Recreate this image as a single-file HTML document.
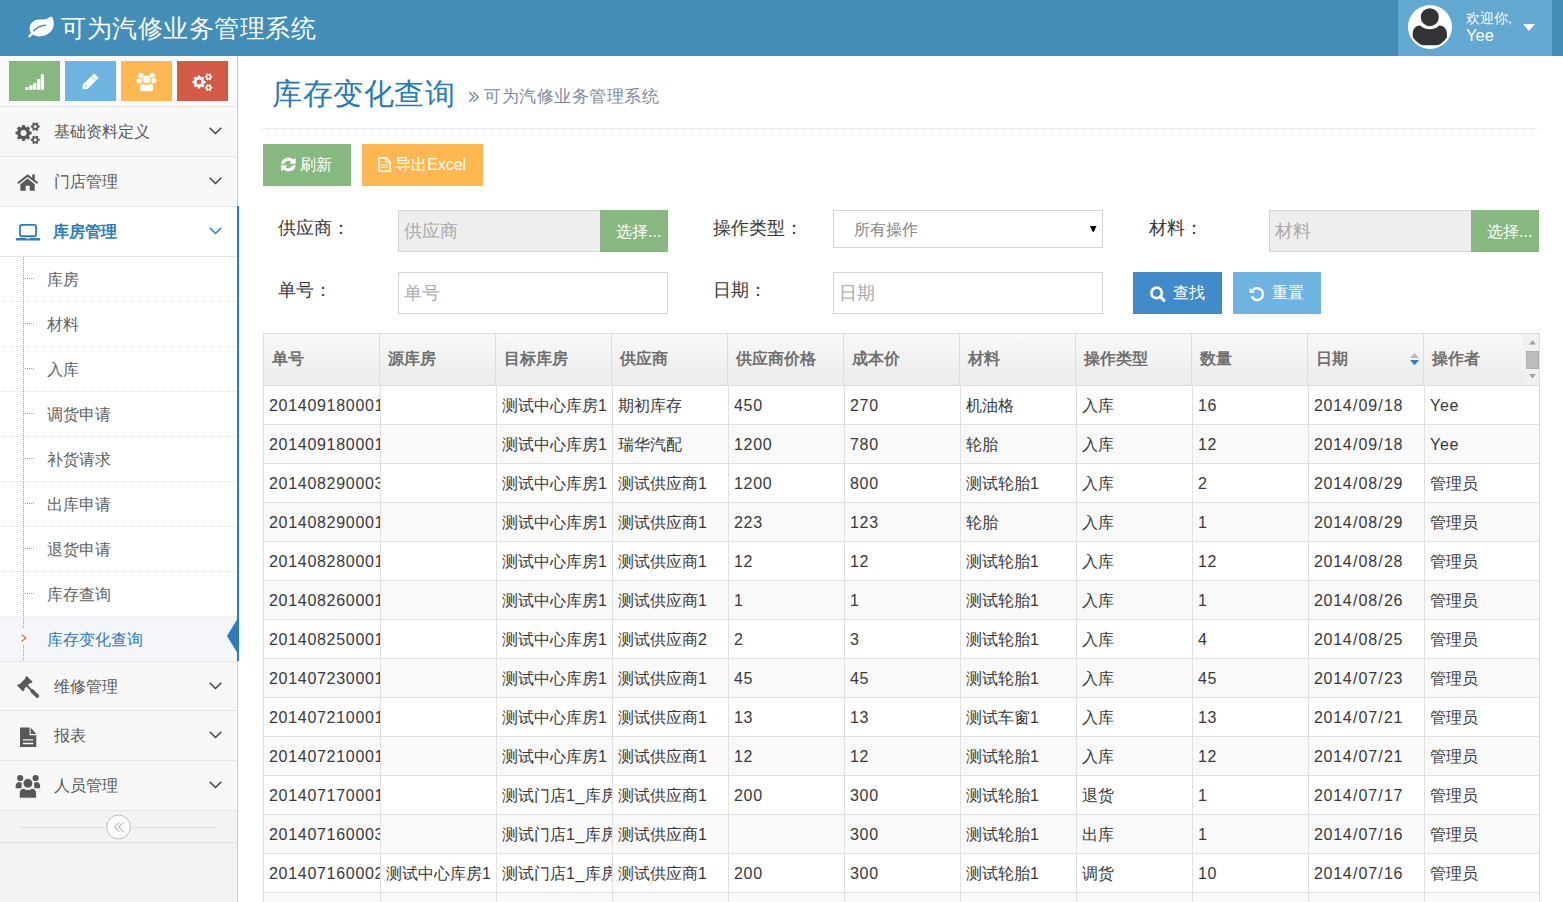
<!DOCTYPE html>
<html><head><meta charset="utf-8">
<style>
*{box-sizing:border-box;margin:0;padding:0}
html,body{width:1563px;height:902px;overflow:hidden}
body{font-family:"Liberation Sans",sans-serif;background:#fff;position:relative;color:#393939}
.a{position:absolute}
.t{position:absolute;white-space:nowrap;line-height:1}
svg{position:absolute;display:block;overflow:visible}
/* navbar */
#nav{left:0;top:0;width:1563px;height:56px;background:#438eb9}
#brand{left:61px;top:16px;font-size:25px;letter-spacing:0.5px;color:#fff}
#user{left:1398px;top:0;width:154px;height:56px;background:#62a8d1}
/* sidebar */
#side{left:0;top:56px;width:238px;height:846px;background:#f2f2f2;border-right:1px solid #ccc}
#shortcuts{left:0;top:56px;width:237px;height:50px;background:#fafafa}
.sc{position:absolute;top:61px;width:51px;height:40px}
.nitem{position:absolute;left:0;width:237px;height:50px;background:#f8f8f8;border-top:1px solid #e5e5e5}
.nitem .t{left:54px;top:17px;font-size:16px;color:#585858}
.sub{position:absolute;left:0;width:237px;height:45px;background:#fff}
.sub .t{left:47px;top:15px;font-size:16px;color:#616161}
.sep{position:absolute;left:0;width:237px;height:1px;background:repeating-linear-gradient(90deg,#e4e4e4 0 1px,transparent 1px 2px)}
.tick{position:absolute;left:25px;width:10px;height:1px;background:repeating-linear-gradient(90deg,#7ea6c8 0 1px,transparent 1px 2px)}
/* content */
.lbl{font-size:18px;color:#393939}
.inp{position:absolute;border:1px solid #d5d5d5;background:#fff;height:42px}
.ph{font-size:18px;color:#aaa;margin-top:-1px}
.btn{position:absolute;height:42px}
.btxt{font-size:16px;color:#fff}
/* grid */
.th{position:absolute;top:0;height:51px;background:linear-gradient(#f8f8f8,#ececec)}
.th .t{font-size:16px;font-weight:bold;color:#707070;left:8px;top:17px}
.row{position:absolute;left:0;width:1275px;height:39px;border-bottom:1px solid #e1e1e1}
.row.alt{background:#f9f9f9}
.cell{position:absolute;top:0;height:38px;border-right:1px solid #e1e1e1;overflow:hidden}
.cell .t{font-size:16px;color:#393939;left:5px;top:12px}
.ls{letter-spacing:0.7px}
.sl{padding:0 0.5px}
</style></head><body>

<!-- NAVBAR -->
<div id="nav" class="a"></div>
<svg style="left:27px;top:15.5px" width="28" height="22" viewBox="0 0 28 22"><path d="M24.3 0.5 C25.9 1.2 26.8 4 26.8 8.3 C26.8 15 20 20.4 12.5 20.4 C9.5 20.4 7.5 19.6 6 18.6 L3.3 21.1 C2.5 21.8 1.3 21.4 1.2 20.3 C1.2 19.8 1.5 19.4 1.9 19 L4 16.9 C3 15.6 2.6 14.1 2.6 12.6 C2.6 7 7.5 3.6 12.5 3.6 C16.5 3.6 19.5 3.4 21 2.3 C22.2 1.5 23.3 0.5 24.3 0.5 Z" fill="#fff"/><path d="M6.6 14.9 C9.5 11.6 13.5 9.5 18.7 9.2" fill="none" stroke="#438eb9" stroke-width="1.4" stroke-linecap="round"/></svg>
<div id="brand" class="t">可为汽修业务管理系统</div>
<div id="user" class="a"></div>
<svg style="left:1408px;top:5px" width="44" height="44" viewBox="0 0 44 44"><defs><clipPath id="av"><circle cx="22" cy="22" r="20.8"/></clipPath></defs><circle cx="22" cy="22" r="22" fill="#fff"/><g clip-path="url(#av)" fill="#333"><circle cx="21.8" cy="12.2" r="9"/><path d="M4.7 40.2 V29 C4.7 23.5 8 20.5 12.3 20.5 C14.8 23 18 24.3 21.8 24.3 C25.6 24.3 28.8 23 31.3 20.5 C35.6 20.5 38.9 23.5 38.9 29 V40.2 Z"/></g><circle cx="22" cy="22" r="20.6" fill="none" stroke="#fff" stroke-width="1.4"/></svg>
<div class="t" style="left:1466px;top:11.5px;font-size:13.5px;color:#fff">欢迎你,</div>
<div class="t" style="left:1466px;top:27px;font-size:16.5px;color:#fff">Yee</div>
<svg style="left:1523px;top:24px" width="12" height="7" viewBox="0 0 12 7"><path d="M0 0 H12 L6 7 Z" fill="#fff"/></svg>

<!-- SIDEBAR -->
<div id="side" class="a"></div>
<div id="shortcuts" class="a"></div>
<div class="sc" style="left:9px;background:#87b87f"></div>
<div class="sc" style="left:65px;background:#6fb3e0"></div>
<div class="sc" style="left:121px;background:#ffb752"></div>
<div class="sc" style="left:177px;background:#d15b47"></div>
<svg style="left:25px;top:73.5px" width="19" height="16" viewBox="0 0 19 16" fill="#fff"><rect x="0.3" y="13.3" width="3.3" height="2.5"/><rect x="4.3" y="11.2" width="3.3" height="4.6"/><rect x="8.1" y="9.2" width="3.3" height="6.6"/><rect x="12" y="5" width="3.3" height="10.8"/><rect x="15.8" y="0.2" width="3.2" height="15.6"/></svg>
<svg style="left:82px;top:73px" width="17" height="17" viewBox="0 0 17 17"><path d="M11.4 1 Q12.1 0.3 12.8 1 L16.1 4.2 Q16.8 4.9 16.1 5.6 L5.8 15.8 L0.6 16.4 L0.8 11.6 Z" fill="#fff"/><path d="M9.3 3.1 L13.9 7.7" stroke="#6fb3e0" stroke-width="0.7"/><path d="M3.1 12.3 L4.4 14" stroke="#6fb3e0" stroke-width="0.9" stroke-linecap="round"/></svg>
<svg style="left:136px;top:71.5px" width="21" height="20" viewBox="0 0 21 20" fill="#fff" stroke="#ffb752" stroke-width="0.7"><circle cx="4.8" cy="3.6" r="3"/><circle cx="16.2" cy="3.6" r="3"/><circle cx="3.3" cy="8.8" r="3"/><circle cx="17.7" cy="8.8" r="3"/><circle cx="10.5" cy="7.2" r="4.3"/><path d="M3.6 15 C3.6 12.6 5.2 11.6 6.8 11.6 C7.8 12.3 9.1 12.7 10.5 12.7 C11.9 12.7 13.2 12.3 14.2 11.6 C15.8 11.6 17.4 12.6 17.4 15 V17.5 C17.4 18.8 16.7 19.5 15.4 19.5 H5.6 C4.3 19.5 3.6 18.8 3.6 17.5 Z"/></svg>

<div class="nitem" style="top:106px"><div class="t">基础资料定义</div></div>
<div class="nitem" style="top:156px"><div class="t">门店管理</div></div>
<div class="nitem" style="top:206px;background:#fff"><div class="t" style="color:#2b7dbc;font-weight:bold;left:53px">库房管理</div></div>
<!-- home -->
<svg style="left:17px;top:174px" width="22" height="18" viewBox="0 0 22 18" fill="#585858"><path d="M0.8 9.2 L10.7 1.6 L20.6 9.2" fill="none" stroke="#585858" stroke-width="2" stroke-linejoin="miter"/><rect x="15.2" y="0.5" width="2.6" height="5"/><path d="M3.4 10.2 L10.7 4.5 L17.7 10.2 V16.8 H12.7 V11.7 H8.7 V16.8 H3.4 Z"/></svg>
<!-- laptop -->
<svg style="left:16px;top:223.5px" width="25" height="17" viewBox="0 0 25 17"><rect x="3.95" y="0.95" width="16.1" height="11.3" rx="1.5" fill="none" stroke="#2b7dbc" stroke-width="1.8"/><path d="M0.6 14.1 H23.6 C24 14.1 24.2 14.3 24.2 14.7 V15.4 C24.2 16 23.8 16.4 23.2 16.4 H0.8 C0.2 16.4 -0.2 16 -0.2 15.4 V14.7 C-0.2 14.3 0.1 14.1 0.6 14.1 Z" fill="#2b7dbc"/><rect x="10.4" y="14.1" width="3.2" height="1" fill="#c9dcec"/></svg>
<!-- chevrons -->
<svg style="left:209px;top:126.7px" width="13" height="8" viewBox="0 0 13 8"><path d="M0.7 0.7 L6.5 6.5 L12.3 0.7" fill="none" stroke="#444" stroke-width="1.5"/></svg>
<svg style="left:209px;top:176.7px" width="13" height="8" viewBox="0 0 13 8"><path d="M0.7 0.7 L6.5 6.5 L12.3 0.7" fill="none" stroke="#444" stroke-width="1.5"/></svg>
<svg style="left:209px;top:226.7px" width="13" height="8" viewBox="0 0 13 8"><path d="M0.7 0.7 L6.5 6.5 L12.3 0.7" fill="none" stroke="#2b7dbc" stroke-width="1.5"/></svg>

<!-- submenu -->
<div class="a" style="left:0;top:256px;width:237px;height:405px;background:#fff;border-top:1px solid #e5e5e5"></div>
<div class="sub" style="top:257px"><div class="t">库房</div></div>
<div class="sub" style="top:302px"><div class="t">材料</div></div>
<div class="sub" style="top:347px"><div class="t">入库</div></div>
<div class="sub" style="top:392px"><div class="t">调货申请</div></div>
<div class="sub" style="top:437px"><div class="t">补货请求</div></div>
<div class="sub" style="top:482px"><div class="t">出库申请</div></div>
<div class="sub" style="top:527px"><div class="t">退货申请</div></div>
<div class="sub" style="top:572px"><div class="t">库存查询</div></div>
<div class="sub" style="top:617px;height:44px;background:#f4f6f9"><div class="t" style="color:#2b7dbc">库存变化查询</div></div>
<div class="sep" style="top:301px"></div><div class="sep" style="top:346px"></div><div class="sep" style="top:391px"></div><div class="sep" style="top:436px"></div><div class="sep" style="top:481px"></div><div class="sep" style="top:526px"></div><div class="sep" style="top:571px"></div><div class="sep" style="top:616px"></div>
<div class="a" style="left:23px;top:257px;width:1px;height:404px;background:repeating-linear-gradient(180deg,#7ea6c8 0 1px,transparent 1px 2px)"></div>
<div class="tick" style="top:278px"></div><div class="tick" style="top:323px"></div><div class="tick" style="top:368px"></div><div class="tick" style="top:413px"></div><div class="tick" style="top:458px"></div><div class="tick" style="top:503px"></div><div class="tick" style="top:548px"></div><div class="tick" style="top:593px"></div>
<div class="a" style="left:19px;top:629px;width:10px;height:16px;background:#f4f6f9"></div>
<svg style="left:21px;top:634px" width="6" height="8" viewBox="0 0 6 8"><path d="M0.6 0.6 L5 4 L0.6 7.4" fill="none" stroke="#c86139" stroke-width="1.1"/></svg>
<!-- active blue border + triangle -->
<div class="a" style="left:237px;top:206px;width:2px;height:455px;background:#2b7dbc"></div>
<svg style="left:227px;top:618px" width="11" height="36" viewBox="0 0 11 36"><path d="M11 0 L0 18 L11 36 Z" fill="#2b7dbc"/></svg>

<div class="nitem" style="top:661px;height:49px"><div class="t" style="top:17px">维修管理</div></div>
<div class="nitem" style="top:710px"><div class="t">报表</div></div>
<div class="nitem" style="top:760px"><div class="t">人员管理</div></div>
<div class="a" style="left:0;top:810px;width:237px;height:33px;background:#f3f3f3;border-top:1px solid #e5e5e5;border-bottom:1px solid #e0e0e0"></div>
<svg style="left:209px;top:681.7px" width="13" height="8" viewBox="0 0 13 8"><path d="M0.7 0.7 L6.5 6.5 L12.3 0.7" fill="none" stroke="#444" stroke-width="1.5"/></svg>
<svg style="left:209px;top:730.7px" width="13" height="8" viewBox="0 0 13 8"><path d="M0.7 0.7 L6.5 6.5 L12.3 0.7" fill="none" stroke="#444" stroke-width="1.5"/></svg>
<svg style="left:209px;top:780.7px" width="13" height="8" viewBox="0 0 13 8"><path d="M0.7 0.7 L6.5 6.5 L12.3 0.7" fill="none" stroke="#444" stroke-width="1.5"/></svg>
<!-- gavel -->
<svg style="left:16px;top:675px" width="24" height="24" viewBox="0 0 24 24" fill="#585858"><g transform="translate(8.85 8.65) rotate(45)"><path d="M-4.15 -6.8 H4.15 V-4.4 H3.3 V4.4 H4.15 V6.8 H-4.15 V4.4 H-3.3 V-4.4 H-4.15 Z"/><rect x="3" y="-1.05" width="6.5" height="2.1"/><rect x="8.6" y="-1.9" width="10.8" height="3.8" rx="1.9"/></g></svg>
<!-- file -->
<svg style="left:19.5px;top:726.5px" width="17" height="21" viewBox="0 0 17 21" fill="#585858"><path fill-rule="evenodd" d="M1 0.5 H9.6 V8.2 H16.3 V19 C16.3 19.6 15.9 20 15.3 20 H1 C0.4 20 0 19.6 0 19 V1.5 C0 0.9 0.4 0.5 1 0.5 Z M3 12.2 V13.6 H13.3 V12.2 Z M3 15.8 V17.2 H13.3 V15.8 Z"/><path d="M10.7 0.5 L16.3 7.1 H10.7 Z"/></svg>
<!-- users -->
<svg style="left:15px;top:774px" width="26" height="25" viewBox="0 0 26 25" fill="#585858"><circle cx="5.2" cy="4" r="3.1"/><circle cx="20.6" cy="4" r="3.1"/><path d="M0.6 12.5 C0.6 9.8 2 8 4.2 8 C4.9 8.5 5.7 8.8 6.8 8.8 L6.5 14.3 H1.6 C1 14.3 0.6 13.9 0.6 13.3 Z M25.2 12.5 C25.2 9.8 23.8 8 21.6 8 C20.9 8.5 20.1 8.8 19 8.8 L19.3 14.3 H24.2 C24.8 14.3 25.2 13.9 25.2 13.3 Z"/><circle cx="12.9" cy="9.3" r="4.9" stroke="#f8f8f8" stroke-width="1"/><path d="M4.2 19.5 C4.2 16.3 6.3 14.2 8.8 14.2 C9.9 15.1 11.3 15.6 12.9 15.6 C14.5 15.6 15.9 15.1 17 14.2 C19.5 14.2 21.6 16.3 21.6 19.5 V22.4 C21.6 23.6 20.9 24.2 19.7 24.2 H6.1 C4.9 24.2 4.2 23.6 4.2 22.4 Z" stroke="#f8f8f8" stroke-width="1"/></svg>
<!-- toggler -->
<div class="a" style="left:19px;top:827px;width:199px;height:1px;background:#e0e0e0"></div>
<svg style="left:106px;top:815px" width="25" height="25" viewBox="0 0 25 25"><circle cx="12.5" cy="12" r="11.9" fill="#fff" stroke="#bbb" stroke-width="1"/><path d="M13.2 7.3 L8.5 12 L13.2 16.7 M17.4 7.3 L12.7 12 L17.4 16.7" fill="none" stroke="#999" stroke-width="1"/></svg>

<svg style="left:15px;top:121.5px" width="25.22" height="22.31" viewBox="0 0 26 23"><path fill-rule="evenodd" fill="#585858" d="M15.23 9.91 L17.06 9.89 L17.06 12.91 L15.23 12.89 L14.40 14.89 L15.71 16.18 L13.58 18.31 L12.29 17.00 L10.29 17.83 L10.31 19.66 L7.29 19.66 L7.31 17.83 L5.31 17.00 L4.02 18.31 L1.89 16.18 L3.20 14.89 L2.37 12.89 L0.54 12.91 L0.54 9.89 L2.37 9.91 L3.20 7.91 L1.89 6.62 L4.02 4.49 L5.31 5.80 L7.31 4.97 L7.29 3.14 L10.31 3.14 L10.29 4.97 L12.29 5.80 L13.58 4.49 L15.71 6.62 L14.40 7.91 Z M5.70 11.40 a3.10 3.10 0 1 0 6.20 0 a3.10 3.10 0 1 0 -6.20 0 Z M24.24 3.65 L25.46 3.58 L25.46 5.82 L24.24 5.75 L23.48 7.07 L24.15 8.09 L22.21 9.21 L21.66 8.12 L20.14 8.12 L19.59 9.21 L17.65 8.09 L18.32 7.07 L17.56 5.75 L16.34 5.82 L16.34 3.58 L17.56 3.65 L18.32 2.33 L17.65 1.31 L19.59 0.19 L20.14 1.28 L21.66 1.28 L22.21 0.19 L24.15 1.31 L23.48 2.33 Z M19.30 4.70 a1.60 1.60 0 1 0 3.20 0 a1.60 1.60 0 1 0 -3.20 0 Z M24.24 17.35 L25.46 17.28 L25.46 19.52 L24.24 19.45 L23.48 20.77 L24.15 21.79 L22.21 22.91 L21.66 21.82 L20.14 21.82 L19.59 22.91 L17.65 21.79 L18.32 20.77 L17.56 19.45 L16.34 19.52 L16.34 17.28 L17.56 17.35 L18.32 16.03 L17.65 15.01 L19.59 13.89 L20.14 14.98 L21.66 14.98 L22.21 13.89 L24.15 15.01 L23.48 16.03 Z M19.30 18.40 a1.60 1.60 0 1 0 3.20 0 a1.60 1.60 0 1 0 -3.20 0 Z"/></svg>
<svg style="left:192.3px;top:72.5px" width="20.67" height="18.285" viewBox="0 0 26 23"><path fill-rule="evenodd" fill="#fff" d="M15.23 9.91 L17.06 9.89 L17.06 12.91 L15.23 12.89 L14.40 14.89 L15.71 16.18 L13.58 18.31 L12.29 17.00 L10.29 17.83 L10.31 19.66 L7.29 19.66 L7.31 17.83 L5.31 17.00 L4.02 18.31 L1.89 16.18 L3.20 14.89 L2.37 12.89 L0.54 12.91 L0.54 9.89 L2.37 9.91 L3.20 7.91 L1.89 6.62 L4.02 4.49 L5.31 5.80 L7.31 4.97 L7.29 3.14 L10.31 3.14 L10.29 4.97 L12.29 5.80 L13.58 4.49 L15.71 6.62 L14.40 7.91 Z M5.70 11.40 a3.10 3.10 0 1 0 6.20 0 a3.10 3.10 0 1 0 -6.20 0 Z M24.24 3.65 L25.46 3.58 L25.46 5.82 L24.24 5.75 L23.48 7.07 L24.15 8.09 L22.21 9.21 L21.66 8.12 L20.14 8.12 L19.59 9.21 L17.65 8.09 L18.32 7.07 L17.56 5.75 L16.34 5.82 L16.34 3.58 L17.56 3.65 L18.32 2.33 L17.65 1.31 L19.59 0.19 L20.14 1.28 L21.66 1.28 L22.21 0.19 L24.15 1.31 L23.48 2.33 Z M19.30 4.70 a1.60 1.60 0 1 0 3.20 0 a1.60 1.60 0 1 0 -3.20 0 Z M24.24 17.35 L25.46 17.28 L25.46 19.52 L24.24 19.45 L23.48 20.77 L24.15 21.79 L22.21 22.91 L21.66 21.82 L20.14 21.82 L19.59 22.91 L17.65 21.79 L18.32 20.77 L17.56 19.45 L16.34 19.52 L16.34 17.28 L17.56 17.35 L18.32 16.03 L17.65 15.01 L19.59 13.89 L20.14 14.98 L21.66 14.98 L22.21 13.89 L24.15 15.01 L23.48 16.03 Z M19.30 18.40 a1.60 1.60 0 1 0 3.20 0 a1.60 1.60 0 1 0 -3.20 0 Z"/></svg>

<!-- CONTENT -->
<div class="t" style="left:272px;top:79px;font-size:30px;letter-spacing:0.5px;color:#2679b5">库存变化查询</div>
<svg style="left:468px;top:91px" width="12" height="12" viewBox="0 0 12 12"><path d="M1.2 1 L6 5.9 L1.2 10.8 M5.3 1 L10.1 5.9 L5.3 10.8" fill="none" stroke="#8089a0" stroke-width="1.4"/></svg><div class="t" style="left:484px;top:87.5px;font-size:17px;letter-spacing:0.55px;color:#8089a0">可为汽修业务管理系统</div>
<div class="a" style="left:263px;top:128px;width:1276px;height:1px;background:repeating-linear-gradient(90deg,#d9d9d9 0 1px,transparent 1px 2px)"></div>

<div class="btn" style="left:263px;top:144px;width:88px;background:#87b87f"><div class="t btxt" style="left:37px;top:13px">刷新</div></div>
<svg style="left:281px;top:157px" width="15" height="15" viewBox="0 0 15 15" fill="#fff"><path d="M0.1 6.8 A7.2 7.2 0 0 1 12.3 2.6 L14.7 0.9 V6.8 H8.5 L10.3 5.1 A4.2 4.2 0 0 0 3.3 6.8 Z"/><path transform="rotate(180 7.4 7.5)" d="M0.1 6.8 A7.2 7.2 0 0 1 12.3 2.6 L14.7 0.9 V6.8 H8.5 L10.3 5.1 A4.2 4.2 0 0 0 3.3 6.8 Z"/></svg>
<div class="btn" style="left:362px;top:144px;width:121px;background:#ffb752"><div class="t btxt" style="left:33px;top:13px">导出Excel</div></div>
<svg style="left:378px;top:157px" width="13" height="15" viewBox="0 0 13 15"><path d="M1 0.8 H8 L12 4.8 V14.2 H1 Z" fill="none" stroke="#fff" stroke-width="1.5"/><path d="M7.6 0.8 V5.2 H12" fill="none" stroke="#fff" stroke-width="1.3"/><path d="M3.3 8 H9.7 M3.3 10.3 H9.7" stroke="#fff" stroke-width="1.1"/></svg>

<div class="t lbl" style="left:278px;top:219px">供应商：</div>
<div class="inp" style="left:398px;top:210px;width:203px;background:#eee"><div class="t ph" style="left:5px;top:12px">供应商</div></div>
<div class="btn" style="left:600px;top:210px;width:68px;background:#87b87f"><div class="t btxt" style="left:16px;top:14px">选择...</div></div>

<div class="t lbl" style="left:713px;top:219px">操作类型：</div>
<div class="inp" style="left:833px;top:210px;width:270px;height:38px"><div class="t" style="left:20px;top:11px;font-size:16px;color:#858585">所有操作</div></div>
<svg style="left:1090px;top:226px" width="7" height="6" viewBox="0 0 7 6"><path d="M0 0 H6.5 L4 5.6 Q3.25 6.3 2.5 5.6 Z" fill="#000"/></svg>

<div class="t lbl" style="left:1149px;top:219px">材料：</div>
<div class="inp" style="left:1269px;top:210px;width:203px;background:#eee"><div class="t ph" style="left:5px;top:12px">材料</div></div>
<div class="btn" style="left:1471px;top:210px;width:68px;background:#87b87f"><div class="t btxt" style="left:16px;top:14px">选择...</div></div>

<div class="t lbl" style="left:278px;top:281px">单号：</div>
<div class="inp" style="left:398px;top:272px;width:270px"><div class="t ph" style="left:5px;top:12px">单号</div></div>
<div class="t lbl" style="left:713px;top:281px">日期：</div>
<div class="inp" style="left:833px;top:272px;width:270px"><div class="t ph" style="left:5px;top:12px">日期</div></div>

<div class="btn" style="left:1133px;top:272px;width:89px;background:#428bca"><div class="t btxt" style="left:40px;top:13px">查找</div></div>
<svg style="left:1149.5px;top:285.5px" width="16" height="17" viewBox="0 0 16 17"><circle cx="6.6" cy="6.9" r="5.2" fill="none" stroke="#fff" stroke-width="2.7"/><path d="M10.2 10.5 L14 14.4" stroke="#fff" stroke-width="3" stroke-linecap="round"/></svg>
<div class="btn" style="left:1233px;top:272px;width:88px;background:#6fb3e0"><div class="t btxt" style="left:39px;top:13px">重置</div></div>
<svg style="left:1248.5px;top:285.5px" width="16" height="16" viewBox="0 0 16 16"><path d="M3.9 4 A5.9 5.9 0 1 1 2.7 10.6" fill="none" stroke="#fff" stroke-width="2.5"/><path d="M0.6 1.6 V6.8 H5.9 Z" fill="#fff"/></svg>

<div class="a" style="left:263px;top:333px;width:1277px;height:569px;border:1px solid #ddd;border-bottom:none;background:#fff;overflow:hidden">
<div class="th" style="left:0px;width:116px;border-right:1px solid #ddd;"><div class="t">单号</div></div>
<div class="th" style="left:116px;width:116px;border-right:1px solid #ddd;"><div class="t">源库房</div></div>
<div class="th" style="left:232px;width:116px;border-right:1px solid #ddd;"><div class="t">目标库房</div></div>
<div class="th" style="left:348px;width:116px;border-right:1px solid #ddd;"><div class="t">供应商</div></div>
<div class="th" style="left:464px;width:116px;border-right:1px solid #ddd;"><div class="t">供应商价格</div></div>
<div class="th" style="left:580px;width:116px;border-right:1px solid #ddd;"><div class="t">成本价</div></div>
<div class="th" style="left:696px;width:116px;border-right:1px solid #ddd;"><div class="t">材料</div></div>
<div class="th" style="left:812px;width:116px;border-right:1px solid #ddd;"><div class="t">操作类型</div></div>
<div class="th" style="left:928px;width:116px;border-right:1px solid #ddd;"><div class="t">数量</div></div>
<div class="th" style="left:1044px;width:116px;border-right:1px solid #ddd;"><div class="t">日期</div></div>
<div class="th" style="left:1160px;width:100px;"><div class="t">操作者</div></div>
<div class="a" style="left:1259px;top:0;width:16px;height:51px;background:#f1f1f1"></div>
<div class="a" style="left:0;top:51px;width:1276px;height:1px;background:#ddd"></div>
<div class="row" style="top:52px">
<div class="cell" style="left:0px;width:117px"><div class="t"><span class="ls">201409180001</span></div></div>
<div class="cell" style="left:117px;width:116px"><div class="t"></div></div>
<div class="cell" style="left:233px;width:116px"><div class="t">测试中心库房<span class="ls">1</span></div></div>
<div class="cell" style="left:349px;width:116px"><div class="t">期初库存</div></div>
<div class="cell" style="left:465px;width:116px"><div class="t"><span class="ls">450</span></div></div>
<div class="cell" style="left:581px;width:116px"><div class="t"><span class="ls">270</span></div></div>
<div class="cell" style="left:697px;width:116px"><div class="t">机油格</div></div>
<div class="cell" style="left:813px;width:116px"><div class="t">入库</div></div>
<div class="cell" style="left:929px;width:116px"><div class="t"><span class="ls">16</span></div></div>
<div class="cell" style="left:1045px;width:116px"><div class="t"><span class="ls">2014<span class="sl">/</span>09<span class="sl">/</span>18</span></div></div>
<div class="cell" style="left:1161px;width:115px"><div class="t"><span class="ls">Yee</span></div></div>
</div>
<div class="row alt" style="top:91px">
<div class="cell" style="left:0px;width:117px"><div class="t"><span class="ls">201409180001</span></div></div>
<div class="cell" style="left:117px;width:116px"><div class="t"></div></div>
<div class="cell" style="left:233px;width:116px"><div class="t">测试中心库房<span class="ls">1</span></div></div>
<div class="cell" style="left:349px;width:116px"><div class="t">瑞华汽配</div></div>
<div class="cell" style="left:465px;width:116px"><div class="t"><span class="ls">1200</span></div></div>
<div class="cell" style="left:581px;width:116px"><div class="t"><span class="ls">780</span></div></div>
<div class="cell" style="left:697px;width:116px"><div class="t">轮胎</div></div>
<div class="cell" style="left:813px;width:116px"><div class="t">入库</div></div>
<div class="cell" style="left:929px;width:116px"><div class="t"><span class="ls">12</span></div></div>
<div class="cell" style="left:1045px;width:116px"><div class="t"><span class="ls">2014<span class="sl">/</span>09<span class="sl">/</span>18</span></div></div>
<div class="cell" style="left:1161px;width:115px"><div class="t"><span class="ls">Yee</span></div></div>
</div>
<div class="row" style="top:130px">
<div class="cell" style="left:0px;width:117px"><div class="t"><span class="ls">201408290003</span></div></div>
<div class="cell" style="left:117px;width:116px"><div class="t"></div></div>
<div class="cell" style="left:233px;width:116px"><div class="t">测试中心库房<span class="ls">1</span></div></div>
<div class="cell" style="left:349px;width:116px"><div class="t">测试供应商<span class="ls">1</span></div></div>
<div class="cell" style="left:465px;width:116px"><div class="t"><span class="ls">1200</span></div></div>
<div class="cell" style="left:581px;width:116px"><div class="t"><span class="ls">800</span></div></div>
<div class="cell" style="left:697px;width:116px"><div class="t">测试轮胎<span class="ls">1</span></div></div>
<div class="cell" style="left:813px;width:116px"><div class="t">入库</div></div>
<div class="cell" style="left:929px;width:116px"><div class="t"><span class="ls">2</span></div></div>
<div class="cell" style="left:1045px;width:116px"><div class="t"><span class="ls">2014<span class="sl">/</span>08<span class="sl">/</span>29</span></div></div>
<div class="cell" style="left:1161px;width:115px"><div class="t">管理员</div></div>
</div>
<div class="row alt" style="top:169px">
<div class="cell" style="left:0px;width:117px"><div class="t"><span class="ls">201408290001</span></div></div>
<div class="cell" style="left:117px;width:116px"><div class="t"></div></div>
<div class="cell" style="left:233px;width:116px"><div class="t">测试中心库房<span class="ls">1</span></div></div>
<div class="cell" style="left:349px;width:116px"><div class="t">测试供应商<span class="ls">1</span></div></div>
<div class="cell" style="left:465px;width:116px"><div class="t"><span class="ls">223</span></div></div>
<div class="cell" style="left:581px;width:116px"><div class="t"><span class="ls">123</span></div></div>
<div class="cell" style="left:697px;width:116px"><div class="t">轮胎</div></div>
<div class="cell" style="left:813px;width:116px"><div class="t">入库</div></div>
<div class="cell" style="left:929px;width:116px"><div class="t"><span class="ls">1</span></div></div>
<div class="cell" style="left:1045px;width:116px"><div class="t"><span class="ls">2014<span class="sl">/</span>08<span class="sl">/</span>29</span></div></div>
<div class="cell" style="left:1161px;width:115px"><div class="t">管理员</div></div>
</div>
<div class="row" style="top:208px">
<div class="cell" style="left:0px;width:117px"><div class="t"><span class="ls">201408280001</span></div></div>
<div class="cell" style="left:117px;width:116px"><div class="t"></div></div>
<div class="cell" style="left:233px;width:116px"><div class="t">测试中心库房<span class="ls">1</span></div></div>
<div class="cell" style="left:349px;width:116px"><div class="t">测试供应商<span class="ls">1</span></div></div>
<div class="cell" style="left:465px;width:116px"><div class="t"><span class="ls">12</span></div></div>
<div class="cell" style="left:581px;width:116px"><div class="t"><span class="ls">12</span></div></div>
<div class="cell" style="left:697px;width:116px"><div class="t">测试轮胎<span class="ls">1</span></div></div>
<div class="cell" style="left:813px;width:116px"><div class="t">入库</div></div>
<div class="cell" style="left:929px;width:116px"><div class="t"><span class="ls">12</span></div></div>
<div class="cell" style="left:1045px;width:116px"><div class="t"><span class="ls">2014<span class="sl">/</span>08<span class="sl">/</span>28</span></div></div>
<div class="cell" style="left:1161px;width:115px"><div class="t">管理员</div></div>
</div>
<div class="row alt" style="top:247px">
<div class="cell" style="left:0px;width:117px"><div class="t"><span class="ls">201408260001</span></div></div>
<div class="cell" style="left:117px;width:116px"><div class="t"></div></div>
<div class="cell" style="left:233px;width:116px"><div class="t">测试中心库房<span class="ls">1</span></div></div>
<div class="cell" style="left:349px;width:116px"><div class="t">测试供应商<span class="ls">1</span></div></div>
<div class="cell" style="left:465px;width:116px"><div class="t"><span class="ls">1</span></div></div>
<div class="cell" style="left:581px;width:116px"><div class="t"><span class="ls">1</span></div></div>
<div class="cell" style="left:697px;width:116px"><div class="t">测试轮胎<span class="ls">1</span></div></div>
<div class="cell" style="left:813px;width:116px"><div class="t">入库</div></div>
<div class="cell" style="left:929px;width:116px"><div class="t"><span class="ls">1</span></div></div>
<div class="cell" style="left:1045px;width:116px"><div class="t"><span class="ls">2014<span class="sl">/</span>08<span class="sl">/</span>26</span></div></div>
<div class="cell" style="left:1161px;width:115px"><div class="t">管理员</div></div>
</div>
<div class="row" style="top:286px">
<div class="cell" style="left:0px;width:117px"><div class="t"><span class="ls">201408250001</span></div></div>
<div class="cell" style="left:117px;width:116px"><div class="t"></div></div>
<div class="cell" style="left:233px;width:116px"><div class="t">测试中心库房<span class="ls">1</span></div></div>
<div class="cell" style="left:349px;width:116px"><div class="t">测试供应商<span class="ls">2</span></div></div>
<div class="cell" style="left:465px;width:116px"><div class="t"><span class="ls">2</span></div></div>
<div class="cell" style="left:581px;width:116px"><div class="t"><span class="ls">3</span></div></div>
<div class="cell" style="left:697px;width:116px"><div class="t">测试轮胎<span class="ls">1</span></div></div>
<div class="cell" style="left:813px;width:116px"><div class="t">入库</div></div>
<div class="cell" style="left:929px;width:116px"><div class="t"><span class="ls">4</span></div></div>
<div class="cell" style="left:1045px;width:116px"><div class="t"><span class="ls">2014<span class="sl">/</span>08<span class="sl">/</span>25</span></div></div>
<div class="cell" style="left:1161px;width:115px"><div class="t">管理员</div></div>
</div>
<div class="row alt" style="top:325px">
<div class="cell" style="left:0px;width:117px"><div class="t"><span class="ls">201407230001</span></div></div>
<div class="cell" style="left:117px;width:116px"><div class="t"></div></div>
<div class="cell" style="left:233px;width:116px"><div class="t">测试中心库房<span class="ls">1</span></div></div>
<div class="cell" style="left:349px;width:116px"><div class="t">测试供应商<span class="ls">1</span></div></div>
<div class="cell" style="left:465px;width:116px"><div class="t"><span class="ls">45</span></div></div>
<div class="cell" style="left:581px;width:116px"><div class="t"><span class="ls">45</span></div></div>
<div class="cell" style="left:697px;width:116px"><div class="t">测试轮胎<span class="ls">1</span></div></div>
<div class="cell" style="left:813px;width:116px"><div class="t">入库</div></div>
<div class="cell" style="left:929px;width:116px"><div class="t"><span class="ls">45</span></div></div>
<div class="cell" style="left:1045px;width:116px"><div class="t"><span class="ls">2014<span class="sl">/</span>07<span class="sl">/</span>23</span></div></div>
<div class="cell" style="left:1161px;width:115px"><div class="t">管理员</div></div>
</div>
<div class="row" style="top:364px">
<div class="cell" style="left:0px;width:117px"><div class="t"><span class="ls">201407210001</span></div></div>
<div class="cell" style="left:117px;width:116px"><div class="t"></div></div>
<div class="cell" style="left:233px;width:116px"><div class="t">测试中心库房<span class="ls">1</span></div></div>
<div class="cell" style="left:349px;width:116px"><div class="t">测试供应商<span class="ls">1</span></div></div>
<div class="cell" style="left:465px;width:116px"><div class="t"><span class="ls">13</span></div></div>
<div class="cell" style="left:581px;width:116px"><div class="t"><span class="ls">13</span></div></div>
<div class="cell" style="left:697px;width:116px"><div class="t">测试车窗<span class="ls">1</span></div></div>
<div class="cell" style="left:813px;width:116px"><div class="t">入库</div></div>
<div class="cell" style="left:929px;width:116px"><div class="t"><span class="ls">13</span></div></div>
<div class="cell" style="left:1045px;width:116px"><div class="t"><span class="ls">2014<span class="sl">/</span>07<span class="sl">/</span>21</span></div></div>
<div class="cell" style="left:1161px;width:115px"><div class="t">管理员</div></div>
</div>
<div class="row alt" style="top:403px">
<div class="cell" style="left:0px;width:117px"><div class="t"><span class="ls">201407210001</span></div></div>
<div class="cell" style="left:117px;width:116px"><div class="t"></div></div>
<div class="cell" style="left:233px;width:116px"><div class="t">测试中心库房<span class="ls">1</span></div></div>
<div class="cell" style="left:349px;width:116px"><div class="t">测试供应商<span class="ls">1</span></div></div>
<div class="cell" style="left:465px;width:116px"><div class="t"><span class="ls">12</span></div></div>
<div class="cell" style="left:581px;width:116px"><div class="t"><span class="ls">12</span></div></div>
<div class="cell" style="left:697px;width:116px"><div class="t">测试轮胎<span class="ls">1</span></div></div>
<div class="cell" style="left:813px;width:116px"><div class="t">入库</div></div>
<div class="cell" style="left:929px;width:116px"><div class="t"><span class="ls">12</span></div></div>
<div class="cell" style="left:1045px;width:116px"><div class="t"><span class="ls">2014<span class="sl">/</span>07<span class="sl">/</span>21</span></div></div>
<div class="cell" style="left:1161px;width:115px"><div class="t">管理员</div></div>
</div>
<div class="row" style="top:442px">
<div class="cell" style="left:0px;width:117px"><div class="t"><span class="ls">201407170001</span></div></div>
<div class="cell" style="left:117px;width:116px"><div class="t"></div></div>
<div class="cell" style="left:233px;width:116px"><div class="t">测试门店<span class="ls">1_</span>库房</div></div>
<div class="cell" style="left:349px;width:116px"><div class="t">测试供应商<span class="ls">1</span></div></div>
<div class="cell" style="left:465px;width:116px"><div class="t"><span class="ls">200</span></div></div>
<div class="cell" style="left:581px;width:116px"><div class="t"><span class="ls">300</span></div></div>
<div class="cell" style="left:697px;width:116px"><div class="t">测试轮胎<span class="ls">1</span></div></div>
<div class="cell" style="left:813px;width:116px"><div class="t">退货</div></div>
<div class="cell" style="left:929px;width:116px"><div class="t"><span class="ls">1</span></div></div>
<div class="cell" style="left:1045px;width:116px"><div class="t"><span class="ls">2014<span class="sl">/</span>07<span class="sl">/</span>17</span></div></div>
<div class="cell" style="left:1161px;width:115px"><div class="t">管理员</div></div>
</div>
<div class="row alt" style="top:481px">
<div class="cell" style="left:0px;width:117px"><div class="t"><span class="ls">201407160003</span></div></div>
<div class="cell" style="left:117px;width:116px"><div class="t"></div></div>
<div class="cell" style="left:233px;width:116px"><div class="t">测试门店<span class="ls">1_</span>库房</div></div>
<div class="cell" style="left:349px;width:116px"><div class="t">测试供应商<span class="ls">1</span></div></div>
<div class="cell" style="left:465px;width:116px"><div class="t"></div></div>
<div class="cell" style="left:581px;width:116px"><div class="t"><span class="ls">300</span></div></div>
<div class="cell" style="left:697px;width:116px"><div class="t">测试轮胎<span class="ls">1</span></div></div>
<div class="cell" style="left:813px;width:116px"><div class="t">出库</div></div>
<div class="cell" style="left:929px;width:116px"><div class="t"><span class="ls">1</span></div></div>
<div class="cell" style="left:1045px;width:116px"><div class="t"><span class="ls">2014<span class="sl">/</span>07<span class="sl">/</span>16</span></div></div>
<div class="cell" style="left:1161px;width:115px"><div class="t">管理员</div></div>
</div>
<div class="row" style="top:520px">
<div class="cell" style="left:0px;width:117px"><div class="t"><span class="ls">201407160002</span></div></div>
<div class="cell" style="left:117px;width:116px"><div class="t">测试中心库房<span class="ls">1</span></div></div>
<div class="cell" style="left:233px;width:116px"><div class="t">测试门店<span class="ls">1_</span>库房</div></div>
<div class="cell" style="left:349px;width:116px"><div class="t">测试供应商<span class="ls">1</span></div></div>
<div class="cell" style="left:465px;width:116px"><div class="t"><span class="ls">200</span></div></div>
<div class="cell" style="left:581px;width:116px"><div class="t"><span class="ls">300</span></div></div>
<div class="cell" style="left:697px;width:116px"><div class="t">测试轮胎<span class="ls">1</span></div></div>
<div class="cell" style="left:813px;width:116px"><div class="t">调货</div></div>
<div class="cell" style="left:929px;width:116px"><div class="t"><span class="ls">10</span></div></div>
<div class="cell" style="left:1045px;width:116px"><div class="t"><span class="ls">2014<span class="sl">/</span>07<span class="sl">/</span>16</span></div></div>
<div class="cell" style="left:1161px;width:115px"><div class="t">管理员</div></div>
</div>
<div class="row alt" style="top:559px">
<div class="cell" style="left:0px;width:117px"><div class="t"></div></div>
<div class="cell" style="left:117px;width:116px"><div class="t"></div></div>
<div class="cell" style="left:233px;width:116px"><div class="t"></div></div>
<div class="cell" style="left:349px;width:116px"><div class="t"></div></div>
<div class="cell" style="left:465px;width:116px"><div class="t"></div></div>
<div class="cell" style="left:581px;width:116px"><div class="t"></div></div>
<div class="cell" style="left:697px;width:116px"><div class="t"></div></div>
<div class="cell" style="left:813px;width:116px"><div class="t"></div></div>
<div class="cell" style="left:929px;width:116px"><div class="t"></div></div>
<div class="cell" style="left:1045px;width:116px"><div class="t"></div></div>
<div class="cell" style="left:1161px;width:115px"><div class="t"></div></div>
</div>
</div>
<!-- sort icon & scrollbar -->
<svg style="left:1410px;top:352px" width="9" height="14" viewBox="0 0 9 14"><path d="M0 6 L4.5 0.8 L9 6 Z" fill="#bbb"/><path d="M0 8 H9 L4.5 13.2 Z" fill="#307ecc"/></svg>
<svg style="left:1529px;top:340px" width="7" height="5" viewBox="0 0 7 5"><path d="M0 4.5 L3.5 0 L7 4.5 Z" fill="#a3a3a3"/></svg>
<div class="a" style="left:1526px;top:351px;width:13px;height:18px;background:#bcbcbc;border:1px solid #b0b0b0"></div>
<svg style="left:1529px;top:373.5px" width="7" height="5" viewBox="0 0 7 5"><path d="M0 0 H7 L3.5 4.5 Z" fill="#a3a3a3"/></svg>

</body></html>
